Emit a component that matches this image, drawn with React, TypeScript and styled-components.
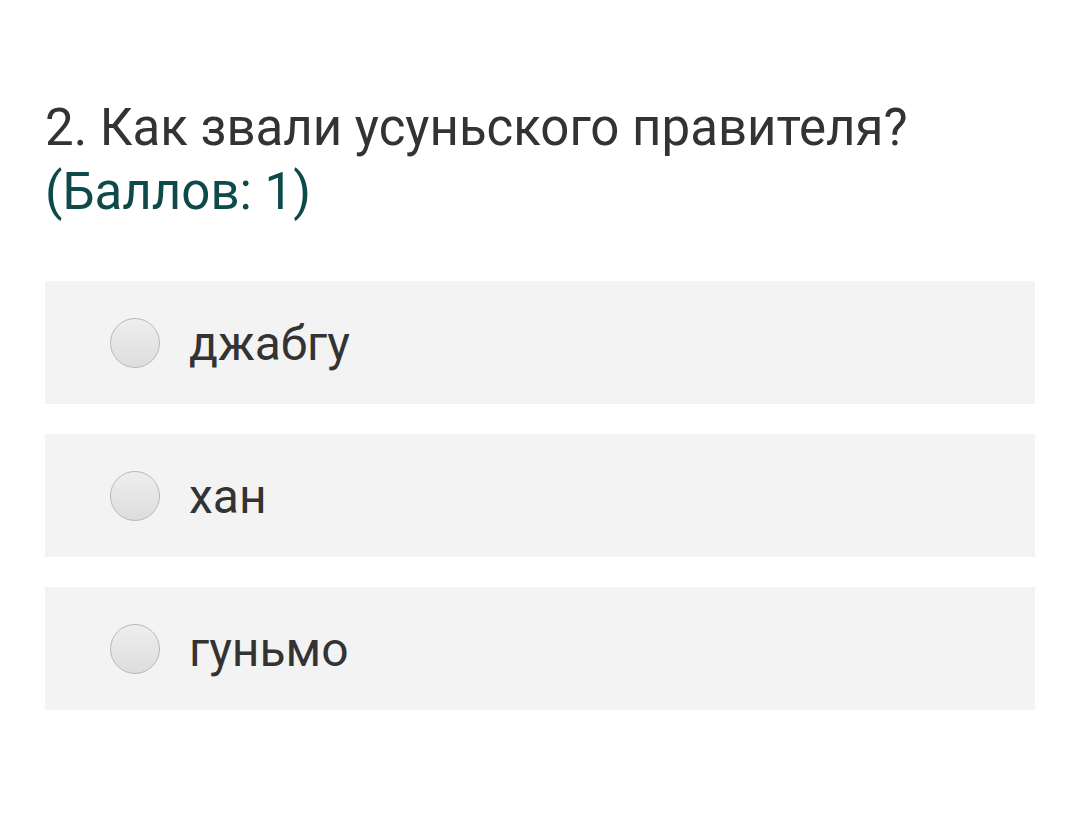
import { createGlobalStyle } from 'styled-components';
import styled from 'styled-components';

const GlobalStyle = createGlobalStyle`
    body {
        margin: 0;
        background: #ffffff;
        font-family: Roboto, 'Noto Sans', sans-serif;
    }
`;

const Page = styled.div`
    padding: 96px 45px 0 45px;
    width: 990px;
`;

const Question = styled.h2`
    margin: 0;
    font-weight: 400;
    font-size: 51px;
    line-height: 64px;
    color: #333333;
`;

const Points = styled.span`
    display: block;
    color: #0e4a4a;
`;

const Options = styled.div`
    margin-top: 57px;
    display: flex;
    flex-direction: column;
    gap: 30px;
`;

const Option = styled.label`
    display: flex;
    align-items: center;
    height: 123px;
    padding-left: 65px;
    background: #f3f3f3;
    font-size: 48px;
    color: #333333;
`;

const Radio = styled.span`
    width: 50px;
    height: 50px;
    border-radius: 50%;
    border: 1px solid #b8b8b8;
    background: linear-gradient(#eeeeee, #dddddd);
    box-sizing: border-box;
    margin-right: 29px;
`;

const Text = styled.span`
    line-height: 1;
    margin-top: 3px;
`;

const answers = ['джабгу', 'хан', 'гуньмо'];

export default function App() {
    return (
        <>
            <GlobalStyle />
            <Page>
                <Question>
                    2. Как звали усуньского правителя?
                    <Points>(Баллов: 1)</Points>
                </Question>
                <Options>
                    {answers.map((a) => (
                        <Option key={a}>
                            <Radio />
                            <Text>{a}</Text>
                        </Option>
                    ))}
                </Options>
            </Page>
        </>
    );
}
